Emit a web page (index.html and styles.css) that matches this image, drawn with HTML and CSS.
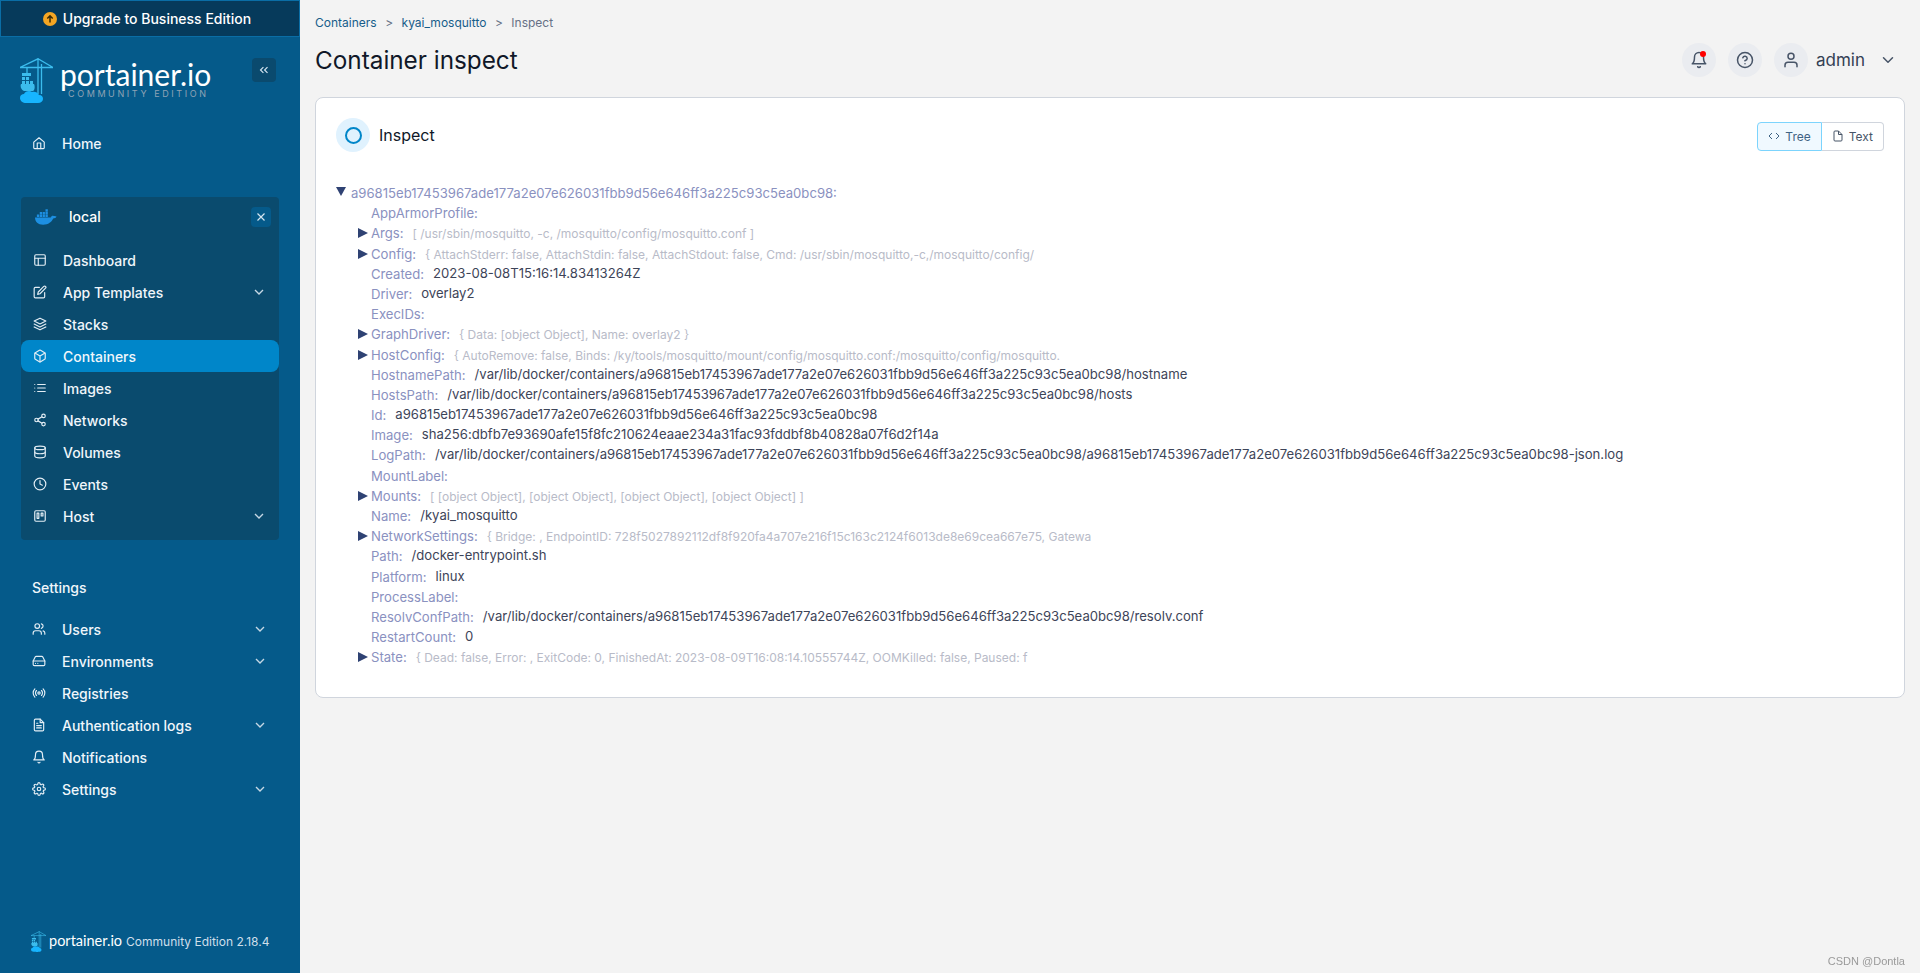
FILE: index.html
```html
<!DOCTYPE html>
<html lang="en">
<head>
<meta charset="utf-8">
<title>Container inspect</title>
<link rel="stylesheet" href="styles.css">
</head>
<body>
<svg class="defs" width="0" height="0">
  <symbol id="crane" viewBox="0 0 33 45">
    <path d="M0 9.500 18 .8 33 9.500M0 9.500h33M7 9.500v6M18 0v36M21.500 6v30" fill="none" stroke="#3bbced" stroke-width="1.300"/>
    <path d="M2 15h9v3H2zM2 19h3v3H2zM6 19h3v3H6zM2 23h3v3H2zM6 23h3v3H6zM10 23h3v3h-3z" fill="#3bbced"/>
    <path d="M1 26h13c1 2 1 6-1 7H4c-3-1-4-5-3-7z" fill="#3bbced"/>
    <path d="M6 45c-3 0-6-2-6-5s2-4 4-4c1-3 6-4 8-2 2-1 6 0 7 3 3 0 4 2 4 4s-2 4-5 4h-2c-2 1-4 1-5 0z" fill="#17b5ff"/>
  </symbol>
</svg>
<aside class="sidebar">
  <div class="upgrade">
    <svg class="upgrade-icon" viewBox="0 0 14 14"><circle cx="7" cy="7" r="7" fill="#f5a623"/><path d="M7 10.500V4M4.300 6.500 7 3.800l2.700 2.700" fill="none" stroke="#3a2a05" stroke-width="1.500"/></svg>
    Upgrade to Business Edition
  </div>
  <div class="brand">
    <svg class="crane"><use href="#crane"/></svg>
    <div class="brand-text">
      <div class="brand-name">portainer.io</div>
      <div class="brand-sub">COMMUNITY EDITION</div>
    </div>
    <button class="collapse"><svg class="ic-sm" viewBox="0 0 24 24"><path d="M11 17l-5-5 5-5M18 17l-5-5 5-5"/></svg></button>
  </div>

  <a class="nav"><svg class="ic" viewBox="0 0 24 24"><path d="M3 10.500 12 3l9 7.500V20a1.500 1.500 0 0 1-1.500 1.500h-15A1.500 1.500 0 0 1 3 20z"/><path d="M9 21.500V12h6v9.500"/></svg>Home</a>

  <section class="env">
    <div class="env-head">
      <svg class="whale" viewBox="0 0 24 16"><path d="M1 8.500h16.500c.5-1.500 2-2 3-1.500.8-.3 2-.2 3 .5-.6 1.500-2 2-3.500 2C18.500 13 15 16 9.500 16 4 16 1.200 13 1 8.500z" fill="#1d8fe1"/><path d="M3 5.500h2.400v2.400H3zM6 5.500h2.400v2.400H6zM9 5.500h2.400v2.400H9zM12 5.500h2.400v2.400H12zM6 2.700h2.400v2.400H6zM9 2.700h2.400v2.400H9zM12 2.700h2.400v2.400H12zM12 0h2.400v2.400H12z" fill="#1d8fe1"/></svg>
      <span class="env-name">local</span>
      <button class="env-close"><svg class="ic-sm" viewBox="0 0 24 24"><path d="M18 6 6 18M6 6l12 12"/></svg></button>
    </div>
    <a class="nav in-env"><svg class="ic" viewBox="0 0 24 24"><rect x="3" y="3" width="18" height="18" rx="2"/><path d="M3 9h18M9 21V9"/></svg>Dashboard</a>
    <a class="nav in-env"><svg class="ic" viewBox="0 0 24 24"><path d="M11 4H4a2 2 0 0 0-2 2v14a2 2 0 0 0 2 2h14a2 2 0 0 0 2-2v-7"/><path d="M18.500 2.500a2.100 2.100 0 0 1 3 3L12 15l-4 1 1-4z"/></svg>App Templates<svg class="chev" viewBox="0 0 24 24"><path d="m6 9 6 6 6-6"/></svg></a>
    <a class="nav in-env"><svg class="ic" viewBox="0 0 24 24"><path d="M12 2 2 7l10 5 10-5zM2 17l10 5 10-5M2 12l10 5 10-5"/></svg>Stacks</a>
    <a class="nav in-env active"><svg class="ic" viewBox="0 0 24 24"><path d="M21 16V8a2 2 0 0 0-1-1.730l-7-4a2 2 0 0 0-2 0l-7 4A2 2 0 0 0 3 8v8a2 2 0 0 0 1 1.730l7 4a2 2 0 0 0 2 0l7-4A2 2 0 0 0 21 16z"/><path d="M3.300 7 12 12l8.700-5M12 22V12"/></svg>Containers</a>
    <a class="nav in-env"><svg class="ic" viewBox="0 0 24 24"><path d="M8 6h13M8 12h13M8 18h13M3 6h.01M3 12h.01M3 18h.01"/></svg>Images</a>
    <a class="nav in-env"><svg class="ic" viewBox="0 0 24 24"><circle cx="18" cy="5" r="3"/><circle cx="6" cy="12" r="3"/><circle cx="18" cy="19" r="3"/><path d="m8.600 13.500 6.800 4M15.400 6.500l-6.800 4"/></svg>Networks</a>
    <a class="nav in-env"><svg class="ic" viewBox="0 0 24 24"><ellipse cx="12" cy="5" rx="9" ry="3"/><path d="M21 12c0 1.660-4 3-9 3s-9-1.340-9-3"/><path d="M3 5v14c0 1.660 4 3 9 3s9-1.340 9-3V5"/></svg>Volumes</a>
    <a class="nav in-env"><svg class="ic" viewBox="0 0 24 24"><circle cx="12" cy="12" r="10"/><path d="M12 6v6l4 2"/></svg>Events</a>
    <a class="nav in-env"><svg class="ic" viewBox="0 0 24 24"><rect x="3" y="3" width="18" height="18" rx="2"/><path d="M7 7h3v9H7zM14 7h3v5h-3z"/></svg>Host<svg class="chev" viewBox="0 0 24 24"><path d="m6 9 6 6 6-6"/></svg></a>
  </section>

  <div class="side-title">Settings</div>
  <a class="nav"><svg class="ic" viewBox="0 0 24 24"><path d="M16 21v-2a4 4 0 0 0-4-4H6a4 4 0 0 0-4 4v2"/><circle cx="9" cy="7" r="4"/><path d="M22 21v-2a4 4 0 0 0-3-3.870M16 3.130a4 4 0 0 1 0 7.750"/></svg>Users<svg class="chev" viewBox="0 0 24 24"><path d="m6 9 6 6 6-6"/></svg></a>
  <a class="nav"><svg class="ic" viewBox="0 0 24 24"><path d="M22 12H2"/><path d="M5.450 5.110 2 12v6a2 2 0 0 0 2 2h16a2 2 0 0 0 2-2v-6l-3.450-6.890A2 2 0 0 0 16.760 4H7.240a2 2 0 0 0-1.790 1.110zM6 16h.01M10 16h.01"/></svg>Environments<svg class="chev" viewBox="0 0 24 24"><path d="m6 9 6 6 6-6"/></svg></a>
  <a class="nav"><svg class="ic" viewBox="0 0 24 24"><circle cx="12" cy="12" r="2"/><path d="M16.240 7.760a6 6 0 0 1 0 8.490M7.760 16.240a6 6 0 0 1 0-8.490M19.070 4.930a10 10 0 0 1 0 14.140M4.930 19.070a10 10 0 0 1 0-14.140"/></svg>Registries</a>
  <a class="nav"><svg class="ic" viewBox="0 0 24 24"><path d="M14 2H6a2 2 0 0 0-2 2v16a2 2 0 0 0 2 2h12a2 2 0 0 0 2-2V8z"/><path d="M14 2v6h6M16 13H8M16 17H8M10 9H8"/></svg>Authentication logs<svg class="chev" viewBox="0 0 24 24"><path d="m6 9 6 6 6-6"/></svg></a>
  <a class="nav"><svg class="ic" viewBox="0 0 24 24"><path d="M18 8A6 6 0 0 0 6 8c0 7-3 9-3 9h18s-3-2-3-9M13.730 21a2 2 0 0 1-3.460 0"/></svg>Notifications</a>
  <a class="nav"><svg class="ic" viewBox="0 0 24 24"><circle cx="12" cy="12" r="3"/><path d="M19.400 15a1.650 1.650 0 0 0 .33 1.820l.06.06a2 2 0 1 1-2.830 2.830l-.06-.06a1.650 1.650 0 0 0-2.820 1.170V21a2 2 0 1 1-4 0v-.09a1.650 1.650 0 0 0-2.820-1.170l-.06.06a2 2 0 1 1-2.830-2.830l.06-.06a1.650 1.650 0 0 0-1.170-2.820H3a2 2 0 1 1 0-4h.09a1.650 1.650 0 0 0 1.170-2.820l-.06-.06a2 2 0 1 1 2.830-2.830l.06.06a1.650 1.650 0 0 0 2.820-1.170V3a2 2 0 1 1 4 0v.09a1.650 1.650 0 0 0 2.820 1.170l.06-.06a2 2 0 1 1 2.830 2.830l-.06.06a1.650 1.650 0 0 0 1.170 2.820H21a2 2 0 1 1 0 4h-.09a1.650 1.650 0 0 0-1.510 1z"/></svg>Settings<svg class="chev" viewBox="0 0 24 24"><path d="m6 9 6 6 6-6"/></svg></a>

  <div class="side-foot">
    <svg class="crane-sm"><use href="#crane"/></svg>
    <span class="foot-name">portainer.io</span>
    <span class="foot-ver">Community Edition 2.18.4</span>
  </div>
</aside>

<main class="main">
  <header class="top">
    <div>
      <nav class="crumbs"><a>Containers</a><i>&gt;</i><a>kyai_mosquitto</a><i>&gt;</i><span>Inspect</span></nav>
      <h1>Container inspect</h1>
    </div>
    <div class="top-right">
      <span class="round bell"><svg class="ic-top" viewBox="0 0 24 24"><path d="M18 8A6 6 0 0 0 6 8c0 7-3 9-3 9h18s-3-2-3-9M13.730 21a2 2 0 0 1-3.460 0"/></svg><b class="dot"></b></span>
      <span class="round"><svg class="ic-top" viewBox="0 0 24 24"><circle cx="12" cy="12" r="10"/><path d="M9.090 9a3 3 0 0 1 5.830 1c0 2-3 3-3 3M12 17h.01"/></svg></span>
      <span class="round"><svg class="ic-top" viewBox="0 0 24 24"><path d="M20 21v-2a4 4 0 0 0-4-4H8a4 4 0 0 0-4 4v2"/><circle cx="12" cy="7" r="4"/></svg></span>
      <span class="user">admin</span>
      <svg class="ic-top user-chev" viewBox="0 0 24 24"><path d="m6 9 6 6 6-6"/></svg>
    </div>
  </header>

  <section class="card">
    <div class="card-head">
      <span class="head-icon"><b></b></span>
      <h2>Inspect</h2>
      <div class="toggle">
        <button class="on"><svg class="ic-btn" viewBox="0 0 24 24"><path d="m16 18 6-6-6-6M8 6l-6 6 6 6"/></svg>Tree</button>
        <button><svg class="ic-btn" viewBox="0 0 24 24"><path d="M13 2H6a2 2 0 0 0-2 2v16a2 2 0 0 0 2 2h12a2 2 0 0 0 2-2V9zM13 2v7h7"/></svg>Text</button>
      </div>
    </div>

    <div class="tree">
      <div class="row root"><span class="arrow down"></span><span class="key">a96815eb17453967ade177a2e07e626031fbb9d56e646ff3a225c93c5ea0bc98:</span></div>
      <div class="row"><span class="key">AppArmorProfile:</span></div>
      <div class="row exp"><span class="arrow"></span><span class="key">Args:</span><span class="prev">[ /usr/sbin/mosquitto, -c, /mosquitto/config/mosquitto.conf ]</span></div>
      <div class="row exp"><span class="arrow"></span><span class="key">Config:</span><span class="prev">{ AttachStderr: false, AttachStdin: false, AttachStdout: false, Cmd: /usr/sbin/mosquitto,-c,/mosquitto/config/</span></div>
      <div class="row"><span class="key">Created:</span><span class="val">2023-08-08T15:16:14.83413264Z</span></div>
      <div class="row"><span class="key">Driver:</span><span class="val">overlay2</span></div>
      <div class="row"><span class="key">ExecIDs:</span></div>
      <div class="row exp"><span class="arrow"></span><span class="key">GraphDriver:</span><span class="prev">{ Data: [object Object], Name: overlay2 }</span></div>
      <div class="row exp"><span class="arrow"></span><span class="key">HostConfig:</span><span class="prev">{ AutoRemove: false, Binds: /ky/tools/mosquitto/mount/config/mosquitto.conf:/mosquitto/config/mosquitto.</span></div>
      <div class="row"><span class="key">HostnamePath:</span><span class="val">/var/lib/docker/containers/a96815eb17453967ade177a2e07e626031fbb9d56e646ff3a225c93c5ea0bc98/hostname</span></div>
      <div class="row"><span class="key">HostsPath:</span><span class="val">/var/lib/docker/containers/a96815eb17453967ade177a2e07e626031fbb9d56e646ff3a225c93c5ea0bc98/hosts</span></div>
      <div class="row"><span class="key">Id:</span><span class="val">a96815eb17453967ade177a2e07e626031fbb9d56e646ff3a225c93c5ea0bc98</span></div>
      <div class="row"><span class="key">Image:</span><span class="val">sha256:dbfb7e93690afe15f8fc210624eaae234a31fac93fddbf8b40828a07f6d2f14a</span></div>
      <div class="row"><span class="key">LogPath:</span><span class="val">/var/lib/docker/containers/a96815eb17453967ade177a2e07e626031fbb9d56e646ff3a225c93c5ea0bc98/a96815eb17453967ade177a2e07e626031fbb9d56e646ff3a225c93c5ea0bc98-json.log</span></div>
      <div class="row"><span class="key">MountLabel:</span></div>
      <div class="row exp"><span class="arrow"></span><span class="key">Mounts:</span><span class="prev">[ [object Object], [object Object], [object Object], [object Object] ]</span></div>
      <div class="row"><span class="key">Name:</span><span class="val">/kyai_mosquitto</span></div>
      <div class="row exp"><span class="arrow"></span><span class="key">NetworkSettings:</span><span class="prev">{ Bridge: , EndpointID: 728f5027892112df8f920fa4a707e216f15c163c2124f6013de8e69cea667e75, Gatewa</span></div>
      <div class="row"><span class="key">Path:</span><span class="val">/docker-entrypoint.sh</span></div>
      <div class="row"><span class="key">Platform:</span><span class="val">linux</span></div>
      <div class="row"><span class="key">ProcessLabel:</span></div>
      <div class="row"><span class="key">ResolvConfPath:</span><span class="val">/var/lib/docker/containers/a96815eb17453967ade177a2e07e626031fbb9d56e646ff3a225c93c5ea0bc98/resolv.conf</span></div>
      <div class="row"><span class="key">RestartCount:</span><span class="val">0</span></div>
      <div class="row exp"><span class="arrow"></span><span class="key">State:</span><span class="prev">{ Dead: false, Error: , ExitCode: 0, FinishedAt: 2023-08-09T16:08:14.10555744Z, OOMKilled: false, Paused: f</span></div>
    </div>
  </section>
</main>
<div class="mark">CSDN @Dontla</div>
</body>
</html>
```
FILE: styles.css
```css
* { box-sizing: border-box; }
html, body { margin: 0; height: 973px; overflow: hidden; }
body {
  display: flex;
  background: #f3f3f3;
  font-family: Inter, "Noto Sans", sans-serif;
  color: #101828;
}
.defs { position: absolute; }
button { font-family: inherit; }

/* sidebar */
.sidebar {
  width: 300px;
  flex: none;
  height: 973px;
  background: #055a8a;
  color: #f0f6fb;
  display: flex;
  flex-direction: column;
}
.upgrade {
  height: 37px;
  padding-right: 6px;
  background: #063a5b;
  border: 1px solid #0a6da5;
  display: flex;
  align-items: center;
  justify-content: center;
  gap: 6px;
  font-size: 14px;
  font-weight: 500;
  color: #fff;
}
.upgrade-icon { width: 14px; height: 14px; }
.brand {
  display: flex;
  margin: 21px 24px 24px 20px;
  height: 45px;
}
.crane { width: 33px; height: 45px; flex: none; }
.brand-text { margin-left: 7px; width: 152px; }
.brand-name {
  font-family: Lato, Inter, sans-serif;
  font-size: 30px;
  line-height: 30px;
  margin-top: 1px;
  color: #fff;
  white-space: nowrap;
}
.brand-sub {
  font-size: 9px;
  letter-spacing: 2.600px;
  color: #8fa3b5;
  margin-left: 8px;
  line-height: 10px;
  white-space: nowrap;
}
.collapse {
  width: 24px;
  height: 24px;
  margin-left: auto;
  padding: 0;
  background: #0a4a6e;
  border: 0;
  border-radius: 4px;
  display: flex;
  align-items: center;
  justify-content: center;
}
.ic-sm { width: 14px; height: 14px; fill: none; stroke: #d5e5f0; stroke-width: 2; }
.nav {
  height: 32px;
  display: flex;
  align-items: center;
  margin: 0 21px;
  padding-left: 11px;
  font-size: 14px;
  font-weight: 500;
  border-radius: 8px;
  white-space: nowrap;
}
.in-env { margin: 0; padding-left: 12px; }
.ic {
  width: 14px;
  height: 14px;
  flex: none;
  margin-right: 16px;
  fill: none;
  stroke: #e4eef5;
  stroke-width: 2;
  stroke-linecap: round;
  stroke-linejoin: round;
}
.chev {
  width: 16px;
  height: 16px;
  margin-left: auto;
  margin-right: 11px;
  fill: none;
  stroke: #c6d8e5;
  stroke-width: 2;
}
.in-env .chev { margin-right: 12px; }
.active { background: #0086c9; }
.env {
  margin: 38px 21px 0;
  padding-bottom: 8px;
  background: #0a4b6e;
  border-radius: 4px;
  height: 343px;
}
.env-head {
  height: 39px;
  margin-bottom: 8px;
  display: flex;
  align-items: center;
  padding-left: 13px;
}
.whale { width: 23px; height: 16px; }
.env-name { margin-left: 12px; font-size: 14px; font-weight: 500; color: #fff; }
.env-close {
  width: 20px;
  height: 20px;
  margin-left: auto;
  margin-right: 8px;
  padding: 0;
  border: 0;
  border-radius: 4px;
  background: #055a8a;
  display: flex;
  align-items: center;
  justify-content: center;
}
.side-title {
  margin: 38px 0 15px 32px;
  line-height: 20px;
  font-size: 14px;
  font-weight: 500;
}
.side-foot {
  margin: auto 0 21px 31px;
  display: flex;
  align-items: center;
}
.crane-sm { width: 15px; height: 21px; }
.foot-name {
  margin-left: 3px;
  font-family: Lato, Inter, sans-serif;
  font-size: 14.500px;
  color: #fff;
  margin-top: -3px;
}
.foot-ver { margin-left: 4px; font-size: 12px; color: #cfdfea; }

/* main */
.main { flex: 1; padding: 0 15px; min-width: 0; }
.top { height: 97px; display: flex; justify-content: space-between; }
.crumbs {
  margin-top: 15px;
  font-size: 12px;
  line-height: 16px;
  color: #667085;
  white-space: nowrap;
}
.crumbs a { color: #175d8a; }
.crumbs i { font-style: normal; margin: 0 8.500px; }
h1 {
  margin: 13px 0 0;
  font-size: 24.300px;
  line-height: 32px;
  font-weight: 400;
  color: #101828;
}
.top-right {
  margin-top: 43px;
  height: 34px;
  display: flex;
  align-items: center;
  gap: 12px;
}
.round {
  width: 34px;
  height: 34px;
  border-radius: 50%;
  background: #eaecf0;
  display: flex;
  align-items: center;
  justify-content: center;
  position: relative;
}
.ic-top {
  width: 18px;
  height: 18px;
  fill: none;
  stroke: #475467;
  stroke-width: 2;
  stroke-linecap: round;
  stroke-linejoin: round;
}
.dot {
  position: absolute;
  top: 8px;
  right: 10px;
  width: 6px;
  height: 6px;
  border-radius: 50%;
  background: #f00;
}
.user { margin-left: -4px; font-size: 17px; color: #344054; }
.user-chev { margin-left: 2px; margin-right: 8px; }
.card {
  height: 601px;
  background: #fff;
  border: 1px solid #d0d5dd;
  border-radius: 8px;
  padding: 20px;
}
.card-head { display: flex; align-items: center; height: 34px; }
.head-icon {
  width: 34px;
  height: 34px;
  border-radius: 50%;
  background: #e0f2fe;
  display: flex;
  align-items: center;
  justify-content: center;
}
.head-icon b {
  width: 17px;
  height: 17px;
  border-radius: 50%;
  border: 2px solid #0086c9;
}
h2 {
  margin: 0 0 0 9px;
  font-size: 16px;
  font-weight: 400;
  color: #101828;
}
.toggle { margin-left: auto; display: flex; margin-top: 2px; }
.toggle button {
  height: 29px;
  padding: 0 10px;
  background: #fff;
  border: 1px solid #d0d5dd;
  border-left: 0;
  border-radius: 0 4px 4px 0;
  font-size: 12px;
  color: #475467;
  display: flex;
  align-items: center;
  gap: 5px;
}
.toggle .on {
  background: #f0f9ff;
  border: 1px solid #7cd4fd;
  border-radius: 4px 0 0 4px;
  color: #3f6384;
}
.ic-btn {
  width: 12px;
  height: 12px;
  fill: none;
  stroke: currentColor;
  stroke-width: 2;
}
.tree {
  margin-top: 31px;
  font-size: 13.120px;
  white-space: nowrap;
}
.row {
  display: flex;
  align-items: baseline;
  height: 20.200px;
  line-height: 20px;
  padding-left: 35px;
}
.root { padding-left: 0; }
.exp { padding-left: 20px; }
.arrow {
  width: 15px;
  flex: none;
  display: inline-block;
  height: 0;
  position: relative;
}
.arrow::before {
  content: "";
  position: absolute;
  left: 2px;
  top: -10px;
  border-style: solid;
  border-width: 5.500px 0 5.500px 10px;
  border-color: transparent transparent transparent #2f4273;
}
.arrow.down::before {
  left: 0;
  top: -11px;
  border-width: 9px 5.500px 0 5.500px;
  border-color: #2f4273 transparent transparent transparent;
}
.key { color: #8a91bf; }
.val { margin-left: 9px; color: #3d4458; position: relative; top: -1px; }
.prev { margin-left: 9px; font-size: 12px; color: #b8bbc8; }
.mark {
  position: fixed;
  right: 15px;
  bottom: 6px;
  font-family: "Liberation Sans", sans-serif;
  font-size: 11px;
  color: #9a9a9a;
}
```
